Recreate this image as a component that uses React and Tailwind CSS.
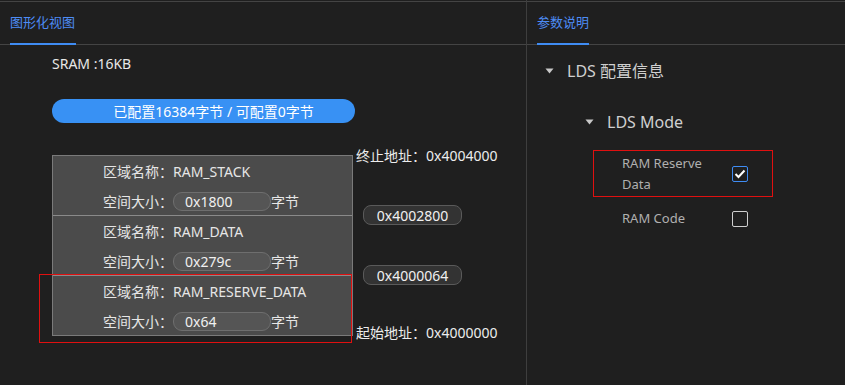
import React, { useState } from "react";

const font = { fontFamily: '"Noto Sans", "Noto Sans CJK SC", sans-serif' };

const regions = [
  { name: "RAM_STACK", size: "0x1800" },
  { name: "RAM_DATA", size: "0x279c" },
  { name: "RAM_RESERVE_DATA", size: "0x64" },
];

const Caret = () => (
  <svg width="9" height="6" viewBox="0 0 9 6" className="shrink-0">
    <path d="M0.5 0.5 L8.5 0.5 L4.5 5.5 Z" fill="#c8c8c8" />
  </svg>
);

const Region = ({ region, first }) => (
  <div
    className={
      "pl-[50px] text-[14px] text-[#e6e6e6] " +
      (first ? "h-[59px]" : "h-[60px] border-t border-[#8a8a8a]")
    }
  >
    <div className="h-[30px] flex items-center">
      <span>区域名称：</span>
      <span>{region.name}</span>
    </div>
    <div className="h-[30px] flex items-center">
      <span>空间大小：</span>
      <input
        readOnly
        value={region.size}
        className="w-[98px] h-[19px] rounded-[9px] bg-[#555555] border border-[#6e6e6e] pl-[11px] text-[14px] text-[#f0f0f0] outline-none"
        style={font}
      />
      <span>字节</span>
    </div>
  </div>
);

const AddrPill = ({ value, className }) => (
  <div
    className={
      "ml-[7px] w-[99px] h-[20px] rounded-[8px] bg-[#333333] border border-[#5a5a5a] flex items-center justify-center text-[14px] text-[#f0f0f0] " +
      className
    }
  >
    {value}
  </div>
);

const Check = ({ checked, onClick }) => (
  <button
    onClick={onClick}
    className={
      "w-[16px] h-[16px] rounded-[2px] border flex items-center justify-center shrink-0 " +
      (checked ? "border-[#3f8cf3] bg-[#1f1f1f]" : "border-[#cfcfcf] bg-transparent")
    }
  >
    {checked && (
      <svg width="12" height="10" viewBox="0 0 12 10">
        <path d="M1.5 5 L4.5 8 L10.5 1.5" stroke="#ffffff" strokeWidth="2" fill="none" />
      </svg>
    )}
  </button>
);

const App = () => {
  const [reserve, setReserve] = useState(true);
  const [code, setCode] = useState(false);

  return (
    <div className="w-[845px] h-[385px] bg-[#1f1f1f] overflow-hidden flex" style={font}>
      {/* left pane */}
      <div className="w-[527px] h-full border-r border-[#3e3e3e] flex flex-col">
        <div className="mt-px border-t border-[#444444] h-[44px] border-b pl-[10px] flex">
          <div className="relative h-full flex items-center text-[13px] text-[#4d8cf5]">
            图形化视图
            <div className="absolute left-0 right-[-1px] bottom-[-1px] h-[2px] bg-[#3f8cf3]" />
          </div>
        </div>

        <div className="pl-[52px]">
          <div className="mt-[9px] h-[18px] flex items-center text-[14px] text-[#e8e8e8]">SRAM :16KB</div>
          <div className="mt-[27px] w-[303px] h-[24px] rounded-full bg-[#3891f4] pl-[20px] flex items-center justify-center text-[14px] text-white">
            已配置16384字节 / 可配置0字节
          </div>

          <div className="relative mt-[32px] flex items-start">
            <div className="w-[301px] bg-[#4b4b4b] border border-[#7a7a7a]">
              {regions.map((r, i) => (
                <Region key={r.name} region={r} first={i === 0} />
              ))}
            </div>
            <div className="flex flex-col text-[14px] text-[#ececec] -mt-[10px] pl-[3px]">
              <div className="h-[20px] flex items-center whitespace-nowrap">终止地址：0x4004000</div>
              <AddrPill value="0x4002800" className="mt-[40px]" />
              <AddrPill value="0x4000064" className="mt-[40px]" />
              <div className="mt-[37px] h-[20px] flex items-center whitespace-nowrap">起始地址：0x4000000</div>
            </div>
            <div className="absolute left-[-13px] top-[119px] w-[313px] h-[69px] border border-[#e01010] pointer-events-none" />
          </div>
        </div>
      </div>

      {/* right pane */}
      <div className="flex-1 h-full flex flex-col">
        <div className="mt-px border-t border-[#444444] h-[44px] border-b pl-[10px] flex">
          <div className="relative h-full flex items-center text-[13px] text-[#4d8cf5]">
            参数说明
            <div className="absolute left-0 right-0 bottom-[-1px] h-[2px] bg-[#3f8cf3]" />
          </div>
        </div>

        <div className="pl-[18px]">
          <div className="mt-[14px] h-[24px] flex items-center gap-[13px] text-[16px] text-[#cfcfcf]">
            <Caret />
            <span>LDS 配置信息</span>
          </div>
          <div className="pl-[40px]">
            <div className="mt-[27px] h-[24px] flex items-center gap-[13px] text-[16px] text-[#cfcfcf]">
              <Caret />
              <span>LDS Mode</span>
            </div>
            <div className="ml-[8px] mt-[16px] w-[180px] h-[47px] border border-[#e01010] pl-[28px] pr-[24px] flex items-center justify-between">
              <div className="w-[95px] text-[13px] leading-[21px] text-[#b0b0b0]">RAM Reserve Data</div>
              <Check checked={reserve} onClick={() => setReserve(!reserve)} />
            </div>
            <div className="ml-[8px] mt-[5px] w-[180px] h-[34px] pl-[29px] pr-[25px] flex items-center justify-between">
              <div className="text-[13px] text-[#b0b0b0]">RAM Code</div>
              <Check checked={code} onClick={() => setCode(!code)} />
            </div>
          </div>
        </div>
      </div>
    </div>
  );
};

export default App;
